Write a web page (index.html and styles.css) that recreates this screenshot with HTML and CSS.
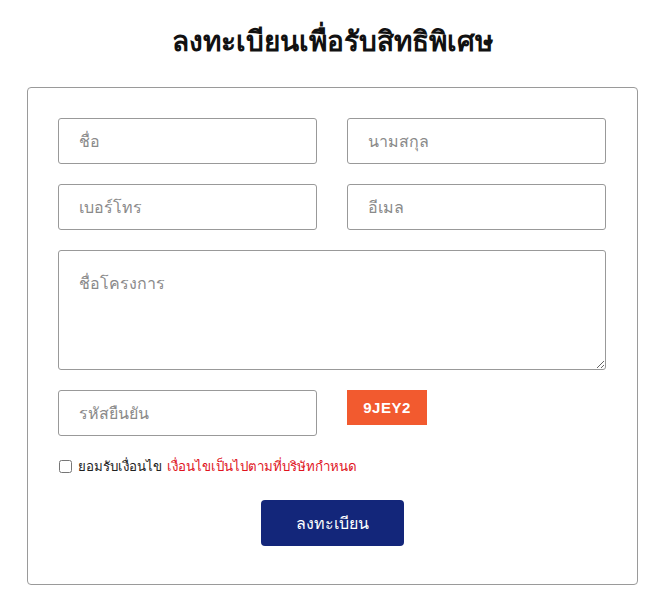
FILE: index.html
```html
<!DOCTYPE html>
<html lang="th">
<head>
    <meta charset="UTF-8">
    <title>ลงทะเบียนเพื่อรับสิทธิพิเศษ</title>
    <link rel="stylesheet" href="styles.css">
</head>
<body>
    <h1 class="page-title">ลงทะเบียนเพื่อรับสิทธิพิเศษ</h1>

    <form class="register-card">
        <div class="form-grid">
            <input class="form-input" type="text" placeholder="ชื่อ">
            <input class="form-input" type="text" placeholder="นามสกุล">
            <input class="form-input" type="tel" placeholder="เบอร์โทร">
            <input class="form-input" type="email" placeholder="อีเมล">
            <textarea class="form-input form-textarea" placeholder="ชื่อโครงการ"></textarea>
            <input class="form-input" type="text" placeholder="รหัสยืนยัน">
            <div class="captcha-cell">
                <span class="captcha">9JEY2</span>
            </div>
        </div>

        <label class="terms">
            <input type="checkbox" class="terms-check">
            <span>ยอมรับเงื่อนไข</span>
            <span class="terms-link">เงื่อนไขเป็นไปตามที่บริษัทกำหนด</span>
        </label>

        <div class="form-actions">
            <button type="button" class="submit-button">ลงทะเบียน</button>
        </div>
    </form>
</body>
</html>
```

FILE: styles.css
```css
* {
    box-sizing: border-box;
}
body {
    margin: 0;
    padding: 20px 28px 24px 27px;
    background-color: #ffffff;
    font-family: 'Noto Sans', 'DejaVu Sans', sans-serif;
    color: #222;
}
.page-title {
    margin: 0 0 27px;
    text-align: center;
    font-size: 28px;
    font-weight: bold;
    line-height: 40px;
    color: #111;
}
.register-card {
    width: 611px;
    border: 1px solid #9a9a9a;
    border-radius: 4px;
    padding: 30px 30px 38px;
}
.form-grid {
    display: grid;
    grid-template-columns: 259px 259px;
    column-gap: 30px;
    row-gap: 20px;
}
.form-input {
    width: 100%;
    height: 46px;
    border: 1px solid #999;
    border-radius: 3px;
    padding: 0 20px;
    font-family: inherit;
    font-size: 16px;
    color: #333;
    background: #fff;
}
.form-input::placeholder {
    color: #8a8a8a;
}
.form-textarea {
    grid-column: 1 / 3;
    height: 120px;
    padding: 20px;
    resize: vertical;
}
.captcha {
    display: inline-block;
    width: 80px;
    height: 35px;
    line-height: 35px;
    text-align: center;
    background-color: #f25a2f;
    color: #fff;
    font-family: 'Liberation Sans', Arial, sans-serif;
    font-weight: bold;
    font-size: 15px;
    letter-spacing: 0.5px;
}
.terms {
    display: flex;
    align-items: center;
    gap: 5px;
    margin-top: 20px;
    font-size: 13.3px;
    color: #222;
}
.terms-check {
    width: 13px;
    height: 13px;
    margin: 0 1px 0 1px;
}
.terms-link {
    color: #e0141e;
}
.form-actions {
    display: flex;
    justify-content: center;
    margin-top: 23px;
}
.submit-button {
    width: 143px;
    height: 46px;
    border: none;
    border-radius: 4px;
    background-color: #13267a;
    color: #fff;
    font-family: inherit;
    font-size: 16px;
    cursor: pointer;
}
```
